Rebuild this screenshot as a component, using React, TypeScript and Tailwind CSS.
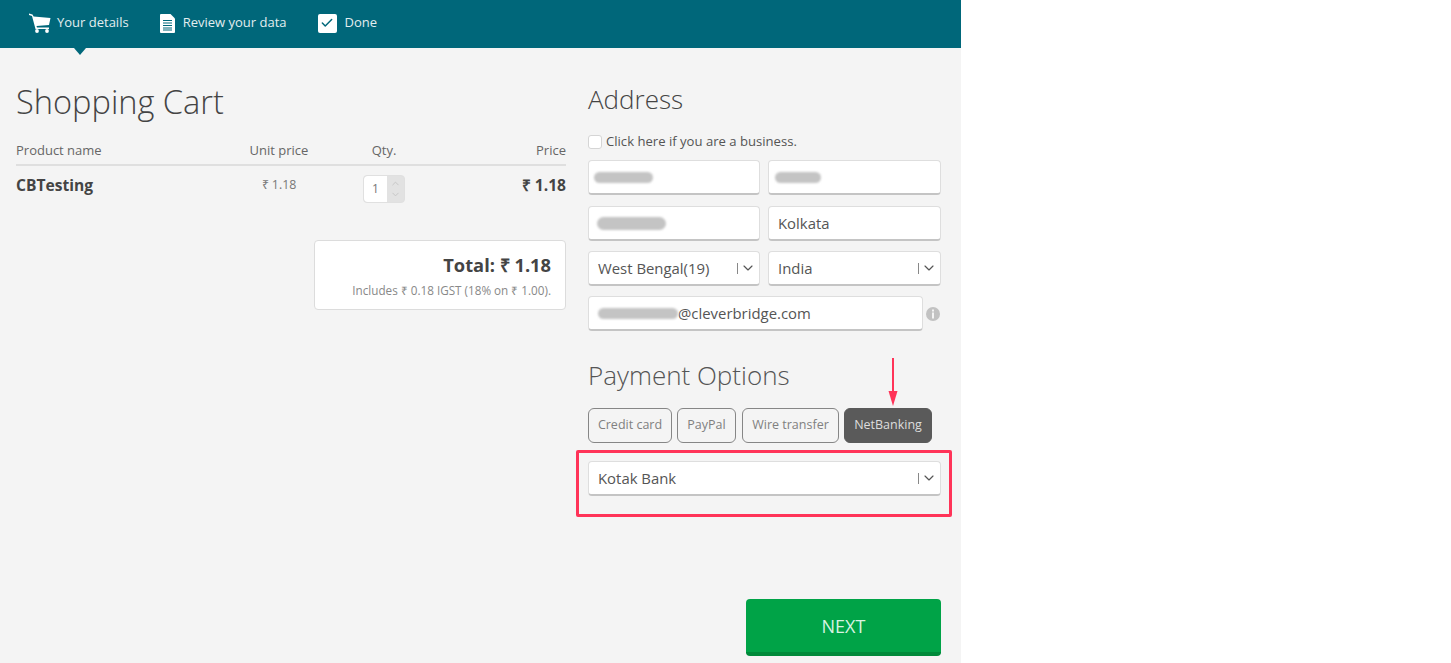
import React from 'react';
import { ChevronDown, ChevronUp, Check } from 'lucide-react';

function CartIcon() {
  return (
    <svg viewBox="0 0 22 20" className="w-[22px] h-[20px]" fill="white">
      <path d="M0 0.5 L3.5 1.5 L4.6 3.5 L21.5 5 L20 12 L7.5 13 L8 14.5 L20 14.5 L20 16 L6.5 16 L3 3 L0 2 Z" />
      <circle cx="8" cy="18" r="1.9" />
      <circle cx="18" cy="18" r="1.9" />
    </svg>
  );
}

function DocIcon() {
  return (
    <svg viewBox="0 0 15 19" className="w-[15px] h-[19px]">
      <path d="M0 1 a1 1 0 0 1 1 -1 H10.5 L15 4.5 V18 a1 1 0 0 1 -1 1 H1 a1 1 0 0 1 -1 -1 Z" fill="white" />
      <path d="M3 6.5 H12 M3 9 H12 M3 11.5 H12 M3 14 H12 M3 16 H12" stroke="#00677a" strokeWidth="1" />
    </svg>
  );
}

function InfoDot() {
  return (
    <svg viewBox="0 0 14 14" className="ml-[3px] mt-[1px] w-[14px] h-[14px]">
      <circle cx="7" cy="7" r="7" fill="#c2c2c2" />
      <rect x="6" y="2.5" width="2" height="2" fill="#f4f4f4" />
      <rect x="6" y="5.5" width="2" height="6" fill="#f4f4f4" />
    </svg>
  );
}

function Blur({ className }: { className: string }) {
  return <div className={`bg-[#c4c4c4] rounded-full blur-[1px] ${className}`} />;
}

function Field({ children, className = 'w-[172px]' }: { children?: React.ReactNode; className?: string }) {
  return (
    <div className={`h-[35px] bg-white rounded border border-[#dedede] border-b-2 border-b-[#c4c4c4] flex items-center px-[9px] text-[14.9px] text-[#555] ${className}`}>
      {children}
    </div>
  );
}

function SelectField({ label, className }: { label: string; className?: string }) {
  return (
    <Field className={className}>
      <span className="flex-1">{label}</span>
      <span className="w-px h-[11px] bg-[#888] mr-[2px]" />
      <ChevronDown className="w-[16px] h-[16px] text-[#555] -mr-[6px]" strokeWidth={1.75} />
    </Field>
  );
}

function PayButton({ label, className, active }: { label: string; className: string; active?: boolean }) {
  return (
    <div
      className={`h-[35px] rounded-md border flex items-center justify-center text-[12.5px] ${className} ${
        active ? 'bg-[#5a5a5a] border-[#5a5a5a] text-[#ddd]' : 'border-[#868686] text-[#808080]'
      }`}
    >
      {label}
    </div>
  );
}

export default function App() {
  return (
    <div className="relative w-[1451px] h-[663px] bg-white overflow-hidden font-['Open_Sans',sans-serif]">
      <div className="w-[961px] h-[663px] bg-[#f4f4f4] flex flex-col">
        {/* Steps bar */}
        <div className="relative h-[48px] pb-[2px] bg-[#00677a] flex items-center pl-[29px] text-[13px] text-[#e3eef0]">
          <div className="flex items-center gap-[6px] mr-[31px]">
            <CartIcon />
            <span>Your details</span>
          </div>
          <div className="flex items-center gap-[8px] mr-[31px]">
            <DocIcon />
            <span>Review your data</span>
          </div>
          <div className="flex items-center gap-[8px]">
            <div className="w-[19px] h-[19px] bg-white rounded-[2px] flex items-center justify-center">
              <Check className="w-[14px] h-[14px] text-[#00677a]" strokeWidth={2.5} />
            </div>
            <span>Done</span>
          </div>
          {/* notch under the active step */}
          <div className="absolute left-[74px] top-[48px] w-0 h-0 border-x-[6px] border-x-transparent border-t-[7px] border-t-[#00677a]" />
        </div>

        <div className="flex-1 flex pl-4 gap-[22px]">
          {/* Cart */}
          <div className="w-[550px]">
            <h1 className="mt-[32px] text-[32.6px] leading-[44px] font-light text-[#444]">Shopping Cart</h1>
            <div className="mt-[15px] grid grid-cols-[224px_78px_132px_116px] items-center h-[27px] border-b-2 border-[#dfdfdf] pb-[1px] text-[13px] text-[#666]">
              <span>Product name</span>
              <span className="text-center">Unit price</span>
              <span className="text-center">Qty.</span>
              <span className="text-right">Price</span>
            </div>
            <div className="mt-[8px] grid grid-cols-[224px_78px_132px_116px] items-start">
              <span className="text-[15.6px] leading-[22px] font-bold text-[#444]">CBTesting</span>
              <span className="text-center text-[12.4px] leading-[22px] text-[#777]">₹ 1.18</span>
              <div className="flex justify-center pt-[1px]">
                <div className="flex w-[42px] h-[28px] rounded bg-[#e2e2e2] border border-[#e0e0e0]">
                  <div className="w-[23px] bg-white rounded-l flex items-center justify-center text-[12px] text-[#777]">1</div>
                  <div className="flex-1 flex flex-col items-center justify-center text-[#c4c4c4]">
                    <ChevronUp className="w-[11px] h-[11px]" />
                    <ChevronDown className="w-[11px] h-[11px]" />
                  </div>
                </div>
              </div>
              <span className="text-right text-[15.6px] leading-[22px] font-bold text-[#444]">₹ 1.18</span>
            </div>
            <div className="mt-[37px] ml-[298px] w-[252px] h-[70px] bg-white rounded border border-[#dcdcdc] pr-[14px] pt-[11px] text-right">
              <div className="text-[18.3px] leading-[25px] font-bold text-[#444]">Total: ₹ 1.18</div>
              <div className="mt-[5px] text-[11.7px] leading-[16px] text-[#888]">Includes ₹ 0.18 IGST (18% on ₹ 1.00).</div>
            </div>
          </div>

          {/* Address and payment */}
          <div className="w-[353px] flex flex-col">
            <h2 className="mt-[32px] text-[26px] leading-[38px] font-light text-[#444]">Address</h2>
            <label className="mt-[16px] flex items-center gap-[4px] h-[16px] text-[13.1px] text-[#555]">
              <span className="w-[14px] h-[14px] bg-white rounded-[3px] border border-[#d5d5d5]" />
              Click here if you are a business.
            </label>
            <div className="mt-[10px] grid grid-cols-[172px_173px] gap-x-2 gap-y-[10px]">
              <Field>
                <Blur className="w-[59px] h-[11px] -ml-[4px]" />
              </Field>
              <Field className="w-[173px]">
                <Blur className="w-[46px] h-[11px] -ml-[3px]" />
              </Field>
              <Field className="w-[172px] mt-[1px]">
                <Blur className="w-[69px] h-[13px] -ml-[1px]" />
              </Field>
              <Field className="w-[173px] mt-[1px]">Kolkata</Field>
              <SelectField label="West Bengal(19)" className="w-[172px]" />
              <SelectField label="India" className="w-[173px]" />
            </div>
            <div className="mt-[10px] flex items-center">
              <Field className="w-[335px]">
                <Blur className="w-[80px] h-[11px]" />
                <span>@cleverbridge.com</span>
              </Field>
              <InfoDot />
            </div>

            <h2 className="mt-[25px] text-[26px] leading-[38px] font-light text-[#555]">Payment Options</h2>
            <div className="mt-[14px] flex">
              <PayButton label="Credit card" className="w-[84px] mr-[5px]" />
              <PayButton label="PayPal" className="w-[59px] mr-[6px]" />
              <PayButton label="Wire transfer" className="w-[97px] mr-[5px]" />
              <PayButton label="NetBanking" className="w-[88px]" active />
            </div>
            <div className="mt-[18px]">
              <SelectField label="Kotak Bank" className="w-[353px]" />
            </div>

            <div className="mt-auto mb-[7px] self-end w-[195px] h-[57px] pt-[2px] bg-[#00a347] rounded border-b-4 border-[#008a3a] flex items-center justify-center text-[18px] text-[#d8f3e2]">
              NEXT
            </div>
          </div>
        </div>
      </div>

      {/* Annotations laid over the screenshot */}
      <div className="absolute left-[576px] top-[450px] w-[376px] h-[67px] border-[3px] border-[#ff3358] rounded-[2px]" />
      <svg className="absolute left-[886px] top-[357px]" width="14" height="50" viewBox="0 0 14 50">
        <path d="M7 1 V38" stroke="#ff3358" strokeWidth="2" />
        <path d="M2.5 34 H11.5 L7 49 Z" fill="#ff3358" />
      </svg>
    </div>
  );
}
